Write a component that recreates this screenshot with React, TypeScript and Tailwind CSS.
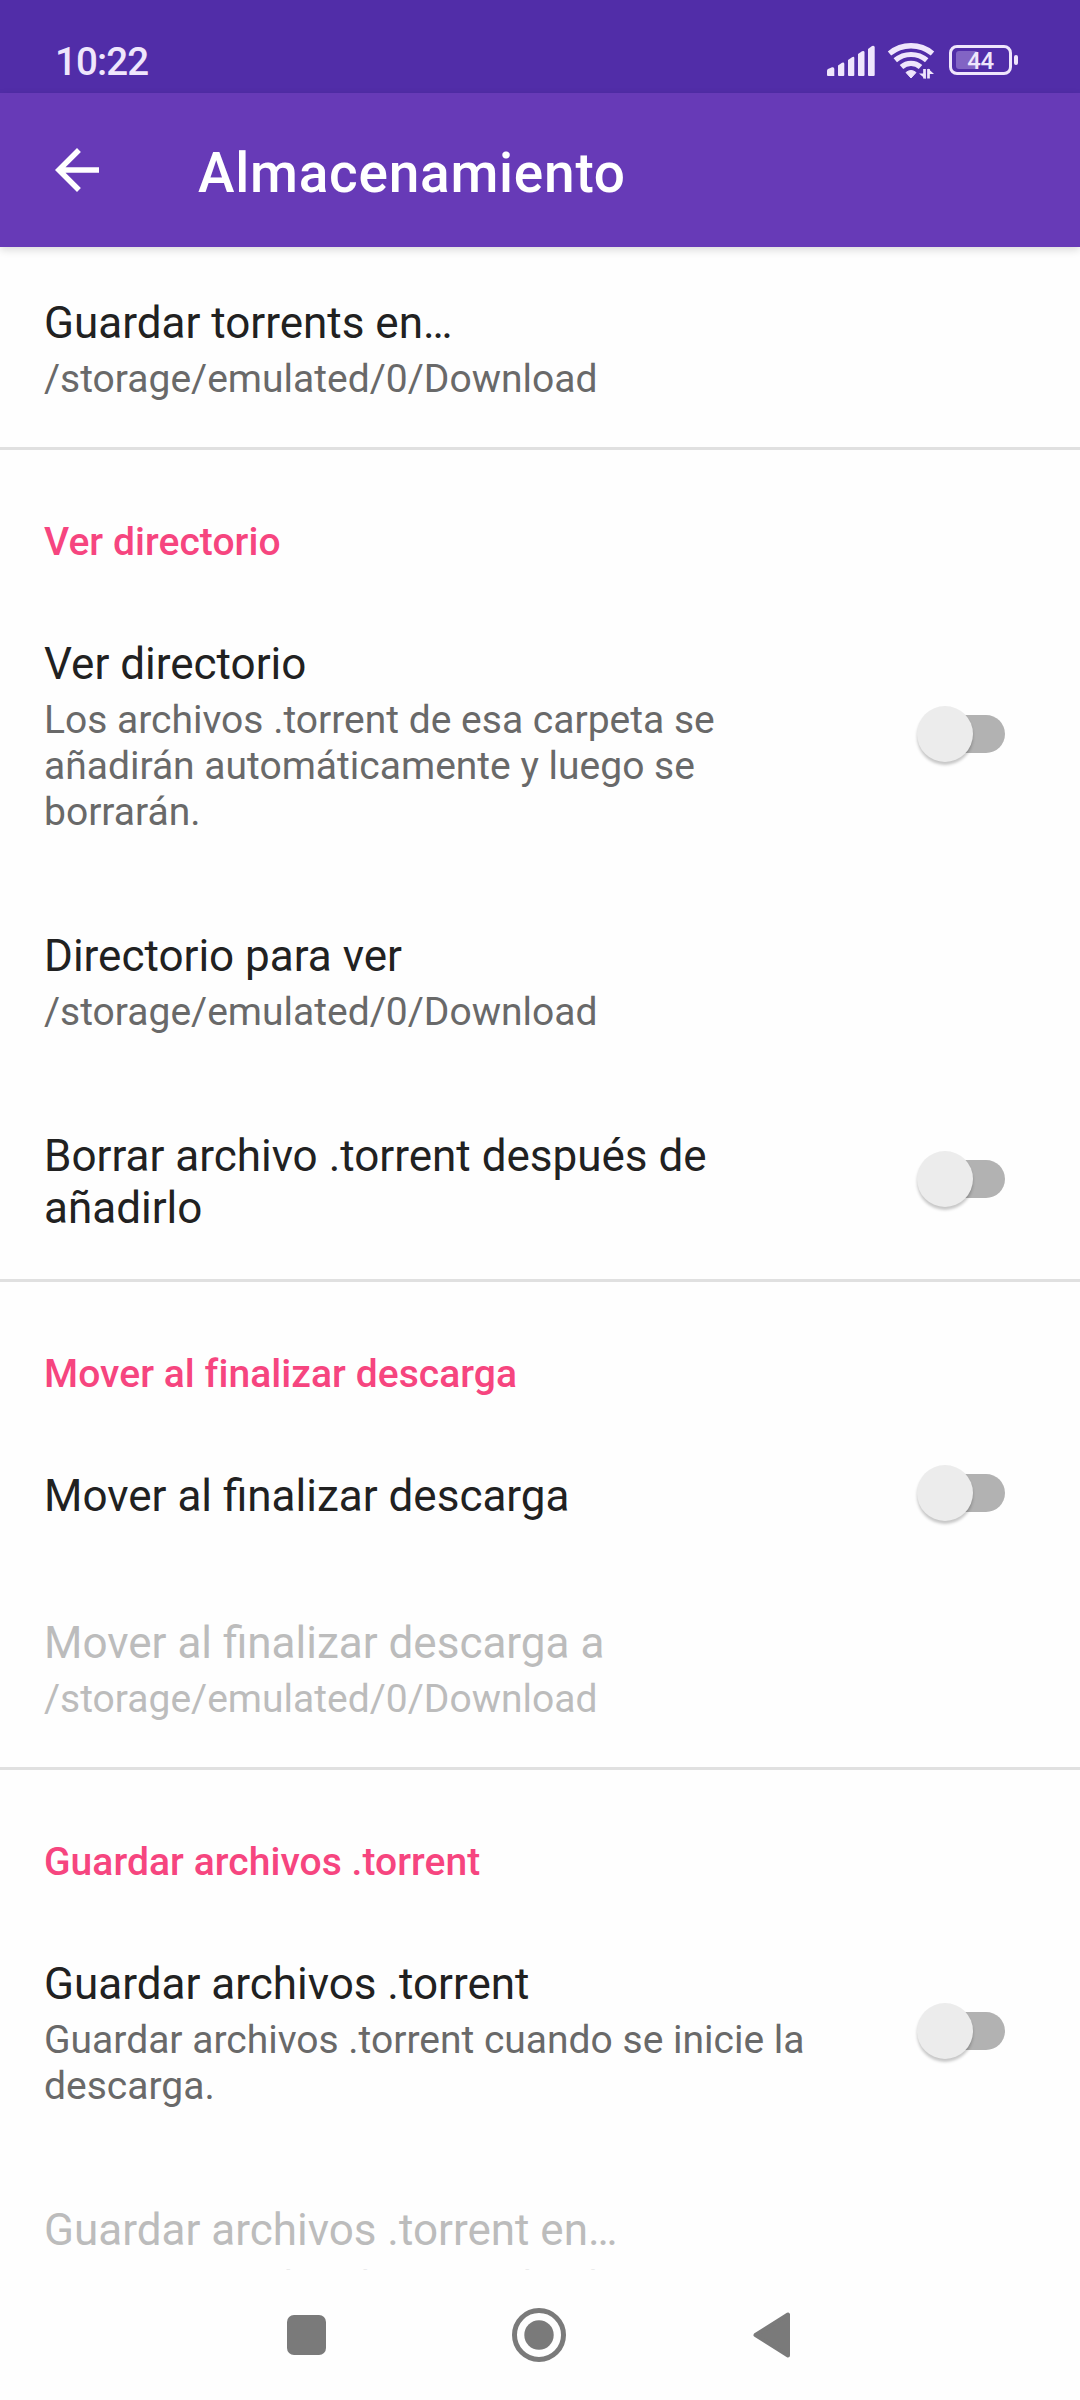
import React, { useState } from 'react';

type PreferenceProps = {
  title: string;
  summary?: string;
  disabled?: boolean;
  toggle?: boolean;
};

const Toggle = () => {
  const [checked, setChecked] = useState(false);

  return (
    <button
      role="switch"
      aria-checked={checked}
      onClick={() => setChecked(!checked)}
      className={`flex items-center w-[88px] h-14 shrink-0 ${checked ? 'flex-row-reverse' : ''}`}
    >
      <span className={`z-10 w-14 h-14 shrink-0 rounded-full shadow-[0_3px_3px_rgba(0,0,0,0.22)] ${checked ? 'bg-[#ff4081]' : 'bg-[#ececec]'}`} />
      <span className={`h-[38px] w-[60px] shrink-0 rounded-full ${checked ? 'bg-[#ffa0c0] -mr-7' : 'bg-[#b2b2b2] -ml-7'}`} />
    </button>
  );
};

const Preference = ({ title, summary, disabled, toggle }: PreferenceProps) => (
  <div className="flex items-center justify-between pl-11 pr-[75px]">
    <div className="w-[796px] pt-[50px] pb-[45px]">
      <p className={`text-[44px] leading-[52px] ${disabled ? 'text-[#bcbcbc]' : 'text-[#212121]'}`}>{title}</p>
      {summary && (
        <p className={`mt-[7px] text-[39px] leading-[46px] ${disabled ? 'text-[#bcbcbc]' : 'text-[#696969]'}`}>
          {summary}
        </p>
      )}
    </div>
    {toggle && (
      <div className={summary ? '' : 'mb-px'}>
        <Toggle />
      </div>
    )}
  </div>
);

const Category = ({ title }: { title: string }) => (
  <h2 className="h-[141px] border-t-[3px] border-[#e0e0e0] pl-11 pt-[69px] text-[39px] leading-[46px] font-medium tracking-[0.06px] [font-variant-ligatures:common-ligatures] text-[#f6457f]">
    {title}
  </h2>
);

const StatusBar = () => (
  <div className="flex h-[93px] justify-between bg-[#512da8] pl-[55px] pr-[62px] text-[#efe6fc]">
    <span className="mt-[39px] text-[38.5px] leading-[46px] font-medium tracking-[-0.9px]">10:22</span>
    <div className="flex pt-[42px]">
      {/* Signal */}
      <svg width="48" height="34" viewBox="0 0 48 34" fill="currentColor">
        <path d="M0 28.500Q0 27.500 1 27L5 25.300Q7.300 24.800 7.300 27V34H1Q0 34 0 33Z" />
        <path d="M11 23.500L15 20.800Q17.300 20 17.300 22V33Q17.300 34 16.300 34H12Q11 34 11 33Z" />
        <path d="M21 18L25 15.200Q27.300 14 27.300 16V33Q27.300 34 26.300 34H22Q21 34 21 33Z" />
        <path d="M31 12L35 9.300Q37.500 8.500 37.500 10.500V33Q37.500 34 36.500 34H32Q31 34 31 33Z" />
        <path d="M41 7L45 4Q47.700 3 47.700 5.500V33Q47.700 34 46.700 34H42Q41 34 41 33Z" />
      </svg>
      {/* Wi-Fi */}
      <svg className="ml-3" width="48" height="38" viewBox="0 0 48 38" fill="none" stroke="currentColor">
        <path d="M2.500 11.500Q12 3.800 24 3.800T45.500 11.500" strokeWidth="5.400" />
        <path d="M8.300 18.300Q15 12.500 24 12.500T39.700 18.300" strokeWidth="5.200" />
        <path d="M14.500 25Q18.500 21.300 24 21.300T33.500 25" strokeWidth="5.200" />
        <path d="M19 30.500Q24 26.500 29 30.500L24 36Z" fill="currentColor" strokeWidth="1" strokeLinejoin="round" />
        <path d="M37.500 27V36.500M41.500 36.500V27" strokeWidth="2.700" />
        <path d="M32 31.500H38.500V37ZM47 32H41V26.500Z" fill="currentColor" stroke="none" />
      </svg>
      {/* Battery */}
      <div className="ml-3.5 mt-[3px] flex items-center self-start">
        <div className="relative flex h-[30px] w-[63px] items-center justify-center rounded-[8px] border-[3px] border-current text-[24px] leading-none font-medium">
          <span className="absolute left-1 top-[3px] h-[18px] w-[22px] rounded-[3px] bg-[#8264c4]" />
          <span className="relative top-px tracking-[-0.5px]">44</span>
        </div>
        <span className="ml-[2px] h-[10px] w-1 rounded-[2px] bg-current" />
      </div>
    </div>
  </div>
);

const NavigationBar = () => (
  <nav className="flex h-[130px] shrink-0 items-center bg-[#fefefe] pl-[287px] text-[#7a7a7a]">
    <span className="h-10 w-[39px] rounded-[7px] bg-current" />
    <svg className="ml-[186px]" width="54" height="54" viewBox="0 0 54 54" fill="none" stroke="currentColor">
      <circle cx="27" cy="27" r="24.500" strokeWidth="5" />
      <circle cx="27" cy="27" r="14.700" fill="currentColor" stroke="none" />
    </svg>
    <svg className="ml-[187px]" width="37" height="46" viewBox="0 0 37 46" fill="currentColor" stroke="currentColor" strokeWidth="4" strokeLinejoin="round">
      <path d="M2.500 23L35 2.500V43.500Z" />
    </svg>
  </nav>
);

const App = () => (
  <div className="flex h-[2400px] w-[1080px] flex-col overflow-hidden bg-[#fefefe] font-['Roboto',sans-serif]">
    <StatusBar />

    <header className="z-10 flex h-[154px] shrink-0 items-center bg-[#673ab7] pl-11 text-white shadow-[0_3px_8px_rgba(0,0,0,0.14)]">
      <svg className="block" width="66" height="66" viewBox="0 0 24 24" fill="currentColor">
        <path d="M20 11H7.830l5.590-5.590L12 4l-8 8 8 8 1.410-1.410L7.830 13H20v-2z" />
      </svg>
      <h1 className="ml-[88px] mt-1.5 text-[55px] leading-[64px] font-medium tracking-[0.0135em]">Almacenamiento</h1>
    </header>

    <main className="min-h-0 flex-1 overflow-hidden">
      <Preference title="Guardar torrents en…" summary="/storage/emulated/0/Download" />

      <Category title="Ver directorio" />
      <Preference
        title="Ver directorio"
        summary="Los archivos .torrent de esa carpeta se añadirán automáticamente y luego se borrarán."
        toggle
      />
      <Preference title="Directorio para ver" summary="/storage/emulated/0/Download" />
      <Preference title="Borrar archivo .torrent después de añadirlo" toggle />

      <Category title="Mover al finalizar descarga" />
      <Preference title="Mover al finalizar descarga" toggle />
      <Preference title="Mover al finalizar descarga a" summary="/storage/emulated/0/Download" disabled />

      <Category title="Guardar archivos .torrent" />
      <Preference
        title="Guardar archivos .torrent"
        summary="Guardar archivos .torrent cuando se inicie la descarga."
        toggle
      />
      <Preference title="Guardar archivos .torrent en…" summary="/storage/emulated/0/Download" disabled />
    </main>

    <NavigationBar />
  </div>
);

export default App;
